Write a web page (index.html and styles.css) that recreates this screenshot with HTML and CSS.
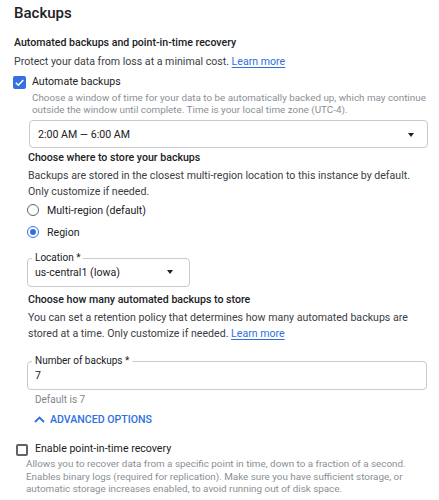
FILE: index.html
```html
<!DOCTYPE html>
<html lang="en">
<head>
<meta charset="utf-8">
<title>Backups</title>
<link rel="stylesheet" href="styles.css">
</head>
<body>
<div class="page">
  <h1 class="title">Backups</h1>

  <h2 class="subhead">Automated backups and point-in-time recovery</h2>
  <p class="body-text intro">Protect your data from loss at a minimal cost. <a class="link" href="#">Learn more</a></p>

  <div class="check-row first">
    <span class="checkbox checked">
      <svg viewBox="0 0 13 13" width="13" height="13"><path d="M2.8 6.8 L5.3 9.2 L10.3 3.9" fill="none" stroke="#fff" stroke-width="1.5"/></svg>
    </span>
    <span class="check-label">Automate backups</span>
  </div>
  <p class="hint hint-auto">Choose a window of time for your data to be automatically backed up, which may continue<br>outside the window until complete. Time is your local time zone (UTC-4).</p>

  <div class="nested">
    <div class="select wide">
      <span class="select-value">2:00 AM — 6:00 AM</span>
      <span class="arrow"></span>
    </div>

    <h3 class="minorhead where">Choose where to store your backups</h3>
    <p class="body-text">Backups are stored in the closest multi-region location to this instance by default.<br>Only customize if needed.</p>

    <div class="radio-group">
      <div class="radio-row">
        <span class="radio"></span>
        <span class="radio-label">Multi-region (default)</span>
      </div>
      <div class="radio-row">
        <span class="radio on"></span>
        <span class="radio-label">Region</span>
      </div>
    </div>

    <fieldset class="field location">
      <legend class="field-label">Location *</legend>
      <div class="field-row">
        <span class="field-value">us-central1 (Iowa)</span>
        <span class="arrow"></span>
      </div>
    </fieldset>

    <h3 class="minorhead howmany">Choose how many automated backups to store</h3>
    <p class="body-text">You can set a retention policy that determines how many automated backups are<br>stored at a time. Only customize if needed. <a class="link" href="#">Learn more</a></p>

    <fieldset class="field number">
      <legend class="field-label">Number of backups *</legend>
      <div class="field-row">
        <span class="field-value">7</span>
      </div>
    </fieldset>
    <p class="helper">Default is 7</p>

    <div class="advanced">
      <svg class="chevron" viewBox="0 0 11 7" width="11" height="7"><path d="M1 6 L5.5 1.5 L10 6" fill="none" stroke="#2f6fe0" stroke-width="1.8"/></svg>
      <span>ADVANCED OPTIONS</span>
    </div>
  </div>

  <div class="check-row pitr">
    <span class="checkbox"></span>
    <span class="check-label">Enable point-in-time recovery</span>
  </div>
  <p class="hint hint-pitr">Allows you to recover data from a specific point in time, down to a fraction of a second.<br>Enables binary logs (required for replication). Make sure you have sufficient storage, or<br>automatic storage increases enabled, to avoid running out of disk space.</p>
</div>
</body>
</html>
```

FILE: styles.css
```css
* { box-sizing: border-box; }

html, body {
  margin: 0;
  padding: 0;
  background: #ffffff;
}

body {
  font-family: Roboto, "Liberation Sans", Arial, sans-serif;
  color: #202124;
  font-size: 10.5px;
}

.page {
  padding: 3px 11px 0 14px;
  width: 439px;
}

.title {
  margin: 0;
  font-size: 15px;
  line-height: 20px;
  font-weight: 500;
  color: #202124;
}

.subhead {
  margin: 12px 0 0;
  font-size: 10.6px;
  line-height: 16px;
  font-weight: 500;
  color: #202124;
}

.body-text {
  margin: 2px 0 0;
  font-size: 10.6px;
  line-height: 16px;
  color: #3c4043;
  white-space: nowrap;
}

.intro { margin-top: 3px; }

.link {
  color: #2f6fe0;
  text-decoration: underline;
  text-underline-offset: 2px;
}

.check-row {
  display: flex;
  align-items: flex-start;
  line-height: 16px;
  font-size: 10.6px;
  color: #202124;
}

.check-row.first {
  margin-top: 4px;
  margin-left: -1px;
  gap: 6px;
}

.checkbox {
  flex: none;
  width: 13px;
  height: 13px;
  margin-top: 2px;
  border: 2px solid #5f6368;
  border-radius: 2px;
  display: flex;
  align-items: center;
  justify-content: center;
}

.checkbox.checked {
  border: none;
  background: #3570e0;
}

.checkbox svg { display: block; }

.hint {
  margin: 2px 0 0;
  font-size: 9.85px;
  line-height: 12px;
  color: #8a8f94;
  white-space: nowrap;
}

.hint-auto { padding-left: 18px; }

.nested {
  padding-left: 13px;
}

.select {
  display: flex;
  align-items: center;
  justify-content: space-between;
  border: 1px solid #c8cacd;
  border-radius: 4px;
}

.select.wide {
  margin: 4px 0 0 2px;
  height: 28px;
  padding: 1px 13px 0 8px;
  font-size: 10.6px;
  color: #202124;
}

.arrow {
  width: 0;
  height: 0;
  border-left: 3.5px solid transparent;
  border-right: 3.5px solid transparent;
  border-top: 4px solid #202124;
}

.minorhead {
  margin: 0;
  font-size: 10.6px;
  line-height: 16px;
  font-weight: 500;
  color: #202124;
}

.minorhead.where { margin-top: 2px; margin-left: 1px; }
.minorhead.howmany { margin-top: 5px; margin-left: 1px; }
.nested > .body-text { margin-left: 1px; }

.radio-group {
  display: flex;
  flex-direction: column;
}

.radio-row {
  height: 22px;
  display: flex;
  align-items: center;
  gap: 8px;
  font-size: 10.6px;
  color: #202124;
}

.radio-row:first-child { margin-top: -1px; }

.radio {
  flex: none;
  width: 12px;
  height: 12px;
  border: 1.5px solid #5f6368;
  border-radius: 50%;
  display: flex;
  align-items: center;
  justify-content: center;
}

.radio.on { border-color: #3570e0; }

.radio.on::after {
  content: "";
  width: 6px;
  height: 6px;
  border-radius: 50%;
  background: #3570e0;
}

.field {
  margin: 0;
  padding: 0 8px 0 7px;
  border: 1px solid #c8cacd;
  border-radius: 4px;
  min-width: 0;
}

.field-label {
  padding: 0 3px;
  margin-left: -3px;
  font-size: 10px;
  line-height: 12px;
  color: #202124;
}

.field-row {
  display: flex;
  align-items: center;
  justify-content: space-between;
  height: 22px;
  padding-bottom: 6px;
  font-size: 10.6px;
  color: #202124;
}

.location {
  width: 163px;
  margin-top: 9px;
}

.location .field-row { padding-right: 8px; }

.number { margin-top: 13px; margin-right: 1px; }

.helper {
  margin: 3px 0 0 8px;
  font-size: 10px;
  line-height: 14px;
  color: #80868b;
}

.advanced {
  margin: 4px 0 0 7px;
  display: flex;
  align-items: center;
  gap: 5px;
  height: 16px;
  font-size: 10.6px;
  font-weight: 500;
  color: #2f6fe0;
}

.check-row.pitr {
  margin-top: 14px;
  margin-left: 2px;
  gap: 7px;
}

.pitr .checkbox { width: 12px; height: 12px; margin-top: 3px; }

.hint-pitr { margin-top: 1px; padding-left: 12px; line-height: 12.5px; }
```
